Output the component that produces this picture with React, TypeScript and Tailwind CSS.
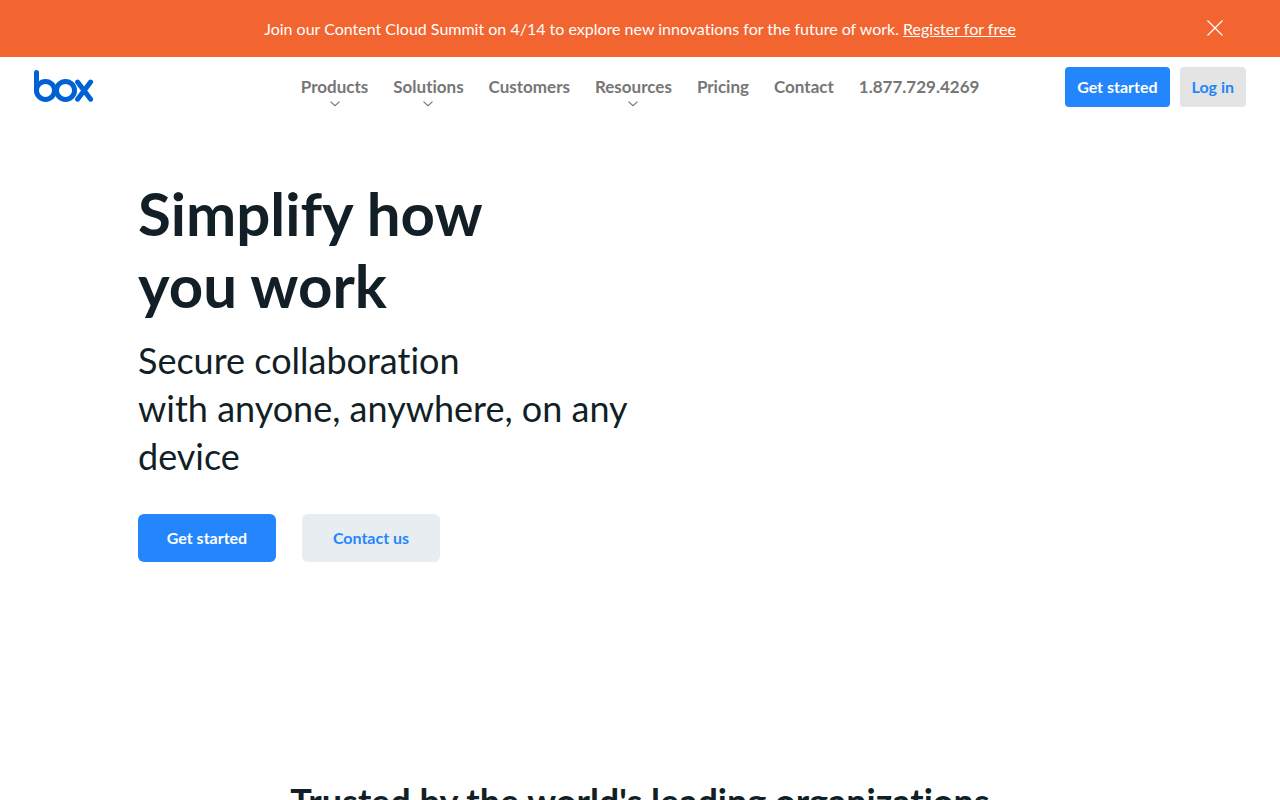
type NavItem = { label: string; menu?: boolean };

const navItems: NavItem[] = [
  { label: "Products", menu: true },
  { label: "Solutions", menu: true },
  { label: "Customers" },
  { label: "Resources", menu: true },
  { label: "Pricing" },
  { label: "Contact" },
  { label: "1.877.729.4269" },
];

function Banner() {
  return (
    <div className="flex h-[57px] items-center bg-[#f36530] px-12 text-white">
      <div className="w-[34px] shrink-0" />
      <p className="flex-1 text-center text-base">
        Join our Content Cloud Summit on 4/14 to explore new innovations for the future of work.{" "}
        <a href="#register" className="underline">
          Register for free
        </a>
      </p>
      <button type="button" aria-label="Close" className="flex w-[34px] shrink-0 justify-center pb-px">
        <svg width="16" height="16" viewBox="0 0 16 16" fill="none" stroke="currentColor" strokeWidth="1.2">
          <path d="M0.5 0.5L15.5 15.5M15.5 0.5L0.5 15.5" />
        </svg>
      </button>
    </div>
  );
}

function Logo() {
  return (
    <a href="#home" aria-label="box" className="block">
      <svg width="60" height="32" viewBox="0 0 60 32" fill="none" stroke="#0061d5" strokeWidth="5" strokeLinecap="round" strokeLinejoin="round">
        <path d="M2.5 2.5V20.4" />
        <circle cx="11.5" cy="20.4" r="9" />
        <circle cx="31.5" cy="20.4" r="9" />
        <path d="M43.6 12.1L56.6 29.2M56.6 12.1L43.6 29.2" />
      </svg>
    </a>
  );
}

function Header() {
  return (
    <header className="flex h-[60px] items-center justify-between px-[34px]">
      <div className="w-[181px] pb-0.5">
        <Logo />
      </div>
      <nav className="flex gap-[25px] text-[17px] leading-7 font-bold text-[#767676]">
        {navItems.map((item) => (
          <a key={item.label} href="#nav" className="relative">
            {item.label}
            {item.menu && (
              <svg className="absolute top-full left-1/2 -translate-x-1/2" width="10" height="6" viewBox="0 0 10 6" fill="none" stroke="currentColor" strokeWidth="1.2">
                <path d="M0.5 0.6L5 4.6L9.5 0.6" />
              </svg>
            )}
          </a>
        ))}
      </nav>
      <div className="flex gap-[10px] font-bold">
        <button type="button" className="h-10 rounded-sm bg-[#2486fc] px-3 text-white">
          Get started
        </button>
        <button type="button" className="h-10 rounded-sm bg-[#e4e4e4] px-3 text-[#2486fc]">
          Log in
        </button>
      </div>
    </header>
  );
}

export default function App() {
  return (
    <div className="min-h-screen bg-white font-['Lato',sans-serif] text-[#121f26] [font-variant-ligatures:none]">
      <Banner />
      <Header />
      <main>
        <section className="px-[138px] pt-[60px]">
          <h1 className="text-[60px] leading-[72px] font-bold">
            Simplify how
            <br />
            you work
          </h1>
          <p className="mt-[15px] max-w-[500px] text-4xl leading-[48px]">
            Secure collaboration
            <br />
            with anyone, anywhere, on any device
          </p>
          <div className="mt-[34px] flex gap-[26px] font-bold">
            <button type="button" className="h-12 w-[138px] rounded-md bg-[#2486fc] text-white">
              Get started
            </button>
            <button type="button" className="h-12 w-[138px] rounded-md bg-[#e8edf1] text-[#2486fc]">
              Contact us
            </button>
          </div>
        </section>
        <h2 className="mt-[215px] text-center text-4xl leading-[48px] font-bold">
          Trusted by the world's leading organizations
        </h2>
      </main>
    </div>
  );
}
